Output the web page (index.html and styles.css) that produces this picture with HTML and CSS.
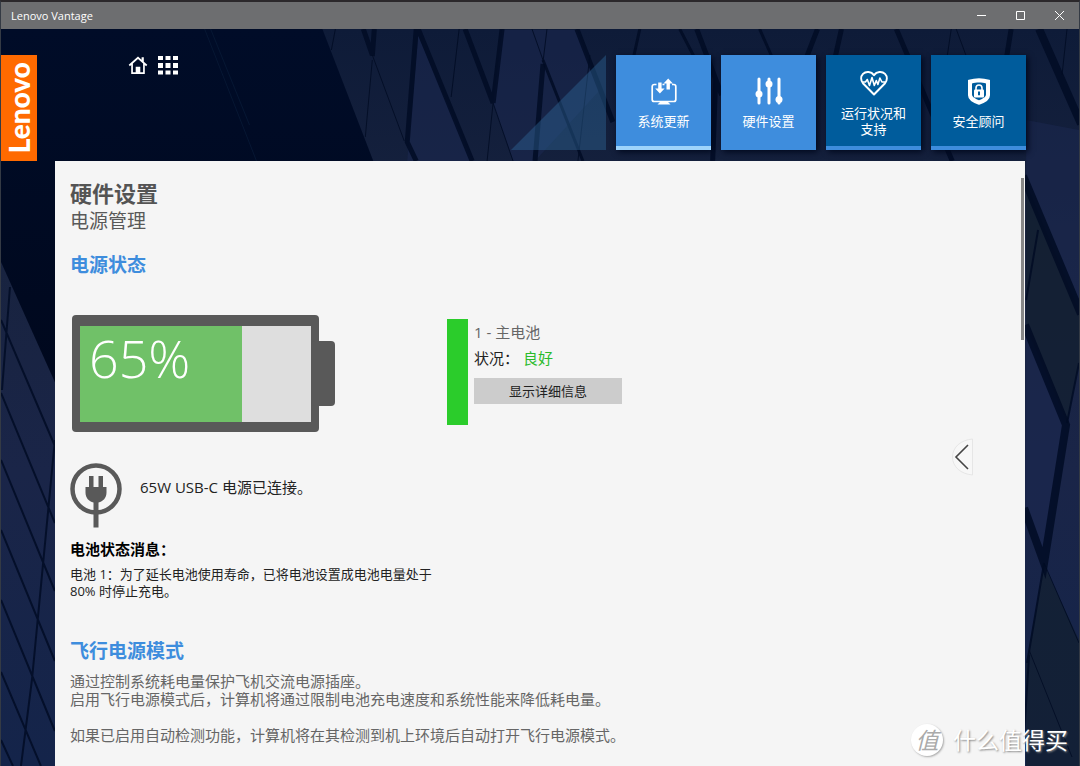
FILE: index.html
```html
<!DOCTYPE html>
<html lang="zh-CN">
<head>
<meta charset="utf-8">
<meta name="viewport" content="width=device-width, initial-scale=1">
<title>Lenovo Vantage</title>
<link rel="stylesheet" href="styles.css">
</head>
<body>
<div class="window">
  <header class="titlebar">
    <span class="titlebar-name">Lenovo Vantage</span>
    <div class="titlebar-controls">
      <button class="win-btn" type="button" aria-label="最小化"><svg width="11" height="11" viewBox="0 0 11 11"><path d="M1 5.5h9"/></svg></button>
      <button class="win-btn" type="button" aria-label="最大化"><svg width="11" height="11" viewBox="0 0 11 11"><path d="M1.5 1.5h8v8h-8z"/></svg></button>
      <button class="win-btn" type="button" aria-label="关闭"><svg width="11" height="11" viewBox="0 0 11 11"><path d="M1 1l9 9M10 1l-9 9"/></svg></button>
    </div>
  </header>

  <div class="app">
    <svg class="backdrop" viewBox="0 29 1080 737" preserveAspectRatio="none" aria-hidden="true">
      <defs>
        <linearGradient id="sky" x1="0" y1="0" x2="0" y2="1">
          <stop offset="0" stop-color="#0e1b38"/>
          <stop offset="0.3" stop-color="#18233f"/>
          <stop offset="0.6" stop-color="#1a2548"/>
          <stop offset="1" stop-color="#14244a"/>
        </linearGradient>
        <linearGradient id="shade" x1="0" y1="0" x2="0" y2="1">
          <stop offset="0" stop-color="#000c28"/>
          <stop offset="1" stop-color="#00081d"/>
        </linearGradient>
      </defs>
      <rect y="29" width="1080" height="737" fill="url(#sky)"/>
      <path d="M0 29H322L373 161V400H62L0 262z" fill="url(#shade)"/>
      <path d="M204 29L256 161M210 29L249 125" stroke="#061733" fill="none"/>
      <path d="M418 36L472 161H407z M502 30L577 30 600 90 535 161H513L493 104z M1027 120L1080 130V300L1027 175z M1027 335L1067 430 1045 560 1027 508z" fill="#1b2850" fill-opacity="0.55"/>
      <path d="M1027 183L1080 310V363L1068 423 1027 327z M1045 565L1080 640V766H1027V663z" fill="#12202f" fill-opacity="0.7"/>
      <g fill="none" stroke="#010c24" stroke-opacity="0.85">
        <path stroke-width="5" d="M363 29L372 55M374 29L372 56M416 29L407 142L416 161M418 29L472 161M465 29L493 103M502 29L493 103M543 64L535 161M577 29L613 122M842 29L834 65M897 29L953 161M1012 29L1007 60M697 29L722 95M818 29L806 60M716 80L713 161"/>
        <path stroke-width="3" d="M543 60L583 161M640 29L634 56M680 29L694 56M760 29L772 56"/>
        <path stroke-width="8" d="M1040 29L1082 124M1024 176L1082 314M1026 325L1067 425L1045 563L1025 508"/>
        <path stroke-width="1" d="M372 55L404 141M372 60L365 137M335 29L331 50M459 29L451 97M493 103L513 161M493 103L487 161M532 29L543 60M547 29L543 62M590 55L578 161M952 29L948 56M957 29L967 56M1068 29L1063 75M1045 563L1080 643M1030 650L1073 757"/>
        <path stroke-width="2" d="M1039 230L1027 300M1080 363L1068 423M1045 563L1028 663M1030 655L1025 735"/>
        <path stroke-width="2" d="M9 287L1 390M0 320L54 446M0 393L54 523M0 460L54 591M0 530L54 661M0 600L54 731M0 672L40 766M0 740L12 766M54 440L31 680L20 766"/>
      </g>
    </svg>

    <div class="topbar">
      <div class="brand" role="img" aria-label="Lenovo"><span class="brand-text">Lenovo</span></div>
      <nav class="quick">
        <a class="quick-link" href="#" aria-label="主页"><svg width="20" height="20" viewBox="0 0 20 20"><path fill="#fff" fill-rule="evenodd" d="M10 1.5l3.6 3.2V2.2h2.2v4.5l3.5 3.1-1.2 1.4-1.3-1.1V19H3.2v-8.9l-1.3 1.1L.7 9.8z M10 3.9L4.9 8.5v8.8h2.8v-5.5h4.6v5.5h2.8V8.5z"/><path fill="#fff" d="M8.200 12h3.600v6H8.200z"/></svg></a>
        <a class="quick-link" href="#" aria-label="全部功能"><svg width="20" height="20" viewBox="0 0 20 20"><path fill="#fff" d="M0 1h5v4H0zM7.500 1h5v4h-5zM15 1h5v4h-5zM0 8h5v5H0zM7.500 8h5v5h-5zM15 8h5v5h-5zM0 15.500h5v4H0zM7.500 15.500h5v4h-5zM15 15.500h5v4h-5z"/></svg></a>
      </nav>
      <nav class="tiles">
        <svg class="wedge" width="95" height="95" viewBox="0 0 95 95" aria-hidden="true"><path d="M0 95L95 0V95z" fill="#2f6a9c" fill-opacity="0.42"/></svg>
        <a class="tile tile-update" href="#">
          <svg width="28" height="28" viewBox="0 0 28 28" fill="none" stroke="#fff" stroke-width="1.7"><path d="M6.500 7.500H4.200a2 2 0 0 0-2 2v13a2 2 0 0 0 2 2h19.600a2 2 0 0 0 2-2v-13a2 2 0 0 0-2-2h-1.800M12.500 7.500h2"/><path d="M10 25h8l2.500 2.500H7.500z" fill="#fff" stroke="none"/><path d="M8.200 5.500h3.400v6h3l-4.700 5-4.700-5h3z M16.500 12.500h3.400v-6h3l-4.700-5-4.700 5h3z" fill="#fff" stroke="none"/></svg>
          <span class="tile-label">系统更新</span>
        </a>
        <a class="tile tile-current" href="#" aria-current="page">
          <svg width="28" height="28" viewBox="0 0 28 28"><path d="M4 2v24M14 2v24M24 2v24" stroke="#fff" stroke-width="3" stroke-linecap="round"/><g fill="#fff"><circle cx="4" cy="17" r="3.500"/><circle cx="14" cy="7" r="3.500"/><circle cx="24" cy="22.500" r="3.500"/></g></svg>
          <span class="tile-label">硬件设置</span>
        </a>
        <a class="tile tile-dark" href="#">
          <svg width="28" height="28" viewBox="0 0 28 28" fill="none" stroke="#fff" stroke-width="2" stroke-linejoin="round"><path d="M14 25.500L3.200 14.500C.5 11.300.6 7.300 3 4.900c3-3 8.200-2.500 11 1.300 2.800-3.800 8-4.300 11-1.300 2.400 2.400 2.500 6.400-.2 9.600z"/><path stroke-width="1.600" d="M2.500 13h3l1.800-2.500 2.200 6L12 8.500l2.300 8 2-5 1.600 4 2-6.500 2 4h3.600"/></svg>
          <span class="tile-label">运行状况和<br>支持</span>
        </a>
        <a class="tile tile-dark" href="#">
          <svg width="28" height="28" viewBox="0 0 28 28"><path d="M14 2.300c3 .1 7 .7 10 1.500v14.400c0 4-5.500 7-10 8.500-4.500-1.500-10-4.500-10-8.500V3.800c3-.8 7-1.400 10-1.500z" fill="#fff" stroke="#fff" stroke-width="2"/><path d="M14 5.500c2.500.1 5 .4 7 1v11.300c0 2.200-3.800 4.300-7 5.400-3.200-1.100-7-3.200-7-5.400V6.500c2-.6 4.500-.9 7-1z" fill="#005c9c"/><path d="M11 13v-2a3 3 0 0 1 6 0V13" fill="none" stroke="#fff" stroke-width="1.600"/><rect x="9" y="12.500" width="10" height="8" rx="1" fill="#fff"/><path d="M14 14.500v3.700" stroke="#005c9c" stroke-width="2"/></svg>
          <span class="tile-label">安全顾问</span>
        </a>
      </nav>
    </div>

    <main class="panel">
      <h1 class="page-title">硬件设置</h1>
      <p class="page-sub">电源管理</p>

      <h2 class="section-title">电源状态</h2>
      <div class="power">
        <div class="battery">
          <div class="battery-body"><div class="battery-level"><div class="battery-fill" style="width: 70%">65%</div></div></div>
          <div class="battery-cap"></div>
        </div>
        <div class="detail">
          <div class="detail-bar"></div>
          <div class="detail-info">
            <p class="detail-name">1 - 主电池</p>
            <p class="detail-state">状况：<span class="good">良好</span></p>
            <button class="detail-btn" type="button">显示详细信息</button>
          </div>
        </div>
      </div>

      <div class="adapter">
        <svg width="52" height="65" viewBox="0 0 52 65" aria-hidden="true"><circle cx="26" cy="26" r="23.500" fill="none" stroke="#595959" stroke-width="4.500"/><path fill="#595959" d="M19 13h4.500v11h5V13H33v11h3.500v5.500c0 5.500-3.500 9-8 10V64.500h-5V39.500c-4.500-1-8-4.500-8-10V24H19z"/></svg>
        <p class="adapter-text">65W USB-C 电源已连接。</p>
      </div>

      <h3 class="message-title">电池状态消息：</h3>
      <p class="message">电池 1：为了延长电池使用寿命，已将电池设置成电池电量处于<br>80% 时停止充电。</p>

      <h2 class="section-title">飞行电源模式</h2>
      <p class="body-text">通过控制系统耗电量保护飞机交流电源插座。<br>启用飞行电源模式后，计算机将通过限制电池充电速度和系统性能来降低耗电量。</p>
      <p class="body-text body-next">如果已启用自动检测功能，计算机将在其检测到机上环境后自动打开飞行电源模式。</p>

      <div class="scroll-thumb"></div>
      <button class="drawer" type="button" aria-label="展开侧栏"><svg width="21" height="38" viewBox="0 0 21 38"><path d="M20.500 1v36C9 36 .5 29 .5 19S9 2 20.500 1z" fill="#f7f7f7" stroke="#e6e6e6"/><path d="M16 7L4 19l12 12" fill="none" stroke="#444" stroke-width="1.600"/></svg></button>
    </main>
  </div>

  <div class="watermark"><span class="watermark-badge">值</span><span>什么值得买</span></div>
</div>
</body>
</html>
```
FILE: styles.css
```css
* { box-sizing: border-box; }

body {
  margin: 0;
  font-family: "Open Sans", "Noto Sans CJK SC", sans-serif;
  color: #222;
}

h1, h2, h3, p { margin: 0; }
a { color: inherit; text-decoration: none; }
button { font: inherit; color: inherit; border: 0; padding: 0; background: none; }
svg { display: block; flex: none; }

.window {
  position: relative;
  display: flex;
  flex-direction: column;
  height: 100vh;
  overflow: hidden;
  border-top: 2px solid #2b282b;
  border-left: 1px solid #343a44;
  border-right: 1px solid #343a44;
  background: #000c28;
}

/* title bar */
.titlebar {
  display: flex;
  justify-content: space-between;
  align-items: center;
  flex: none;
  height: 27px;
  padding: 0 14px 0 10px;
  background: #6d6e70;
  color: #fff;
}
.titlebar-name { font-size: 11px; line-height: 16px; }
.titlebar-controls { display: flex; gap: 28px; }
.win-btn svg { fill: none; stroke: #fff; stroke-width: 1; }

.app {
  position: relative;
  flex: 1;
  min-height: 0;
  display: flex;
  flex-direction: column;
}
.backdrop {
  position: absolute;
  inset: 0;
  width: 100%;
  height: 100%;
}

/* top bar */
.topbar {
  position: relative;
  display: flex;
  flex: none;
  align-items: flex-start;
  padding: 26px 53px 0 0;
}
.brand {
  display: flex;
  align-items: center;
  justify-content: center;
  width: 36px;
  height: 106px;
  background: #ff6a00;
  color: #fff;
}
.brand-text {
  writing-mode: vertical-rl;
  transform: rotate(180deg);
  font-family: Lato, sans-serif;
  font-weight: 900;
  font-size: 28px;
  line-height: 36px;
}
.quick { display: flex; gap: 10px; margin-left: 91px; }
.tiles { display: flex; gap: 10px; margin-left: auto; }
.tile {
  display: flex;
  flex-direction: column;
  align-items: center;
  justify-content: center;
  gap: 8px;
  width: 95px;
  height: 95px;
  padding-top: 4px;
  color: #fff;
  background: #3e8ddd;
  border-bottom: 4px solid #3e8ddd;
  box-shadow: 2px 2px 6px #00081d;
}
.tile-update { border-bottom-color: #9dd3fb; }
.tile-dark { background: #005c9c; border-bottom-color: #3e8ddd; }
.tile-label { font-size: 13px; line-height: 16px; text-align: center; }

/* content panel */
.panel {
  position: relative;
  flex: 1;
  min-height: 0;
  overflow: hidden;
  margin: 0 54px;
  padding: 17px 15px 0;
  background: #f5f5f5;
}
.page-title { font-size: 22px; line-height: 30px; font-weight: 700; color: #545454; }
.page-sub { font-size: 19px; line-height: 26px; color: #595959; }
.section-title { margin-top: 18px; font-size: 19px; line-height: 26px; font-weight: 700; color: #3e8ddd; }

.power { display: flex; gap: 112px; margin: 37px 0 0 2px; }
.battery { display: flex; align-items: center; }
.battery-body {
  width: 247px;
  height: 117px;
  padding: 11px 8px 10px;
  border-radius: 4px;
  background: #595959;
}
.battery-level { height: 100%; background: #dedede; }
.battery-fill {
  height: 100%;
  padding-left: 9px;
  background: #70c168;
  color: #fff;
  font-weight: 300;
  font-size: 52px;
  line-height: 64px;
}
.battery-cap {
  position: relative;
  width: 24px;
  height: 65px;
  margin-left: -8px;
  border-radius: 4px;
  background: #595959;
}

.detail { display: flex; gap: 6px; padding-top: 4px; }
.detail-bar { width: 21px; height: 106px; background: #2bcc2b; }
.detail-info { font-size: 15px; line-height: 26px; }
.detail-name { color: #666; }
.good { margin-left: 4px; color: #2bbb2b; }
.detail-btn {
  display: block;
  width: 148px;
  height: 26px;
  margin-top: 7px;
  background: #ccc;
  font-size: 13px;
  line-height: 26px;
}

.adapter { display: flex; gap: 18px; margin-top: 31px; }
.adapter-text { font-size: 15px; line-height: 20px; padding-top: 14px; }
.message-title { margin-top: 11px; font-size: 15px; line-height: 20px; font-weight: 700; color: #000; }
.message { margin: 7px 0 38px; font-size: 13px; line-height: 17px; }
.body-text { margin-top: 8px; font-size: 15px; line-height: 18px; color: #666; }
.body-next { margin-top: 18px; }

.scroll-thumb {
  position: absolute;
  top: 17px;
  right: 1px;
  width: 3px;
  height: 162px;
  background: #888;
}
.drawer { position: absolute; top: 277px; right: 52px; }

.watermark {
  position: absolute;
  right: 11px;
  bottom: 10px;
  display: flex;
  align-items: center;
  gap: 10px;
  color: #fff;
  font-size: 23px;
  line-height: 32px;
  text-shadow: 1px 1px 2px #888;
}
.watermark-badge {
  width: 32px;
  height: 32px;
  border-radius: 50%;
  background: #fff;
  box-shadow: 1px 1px 2px #aaa;
  color: #aaa;
  text-align: center;
  font-style: italic;
  text-shadow: none;
}
```
